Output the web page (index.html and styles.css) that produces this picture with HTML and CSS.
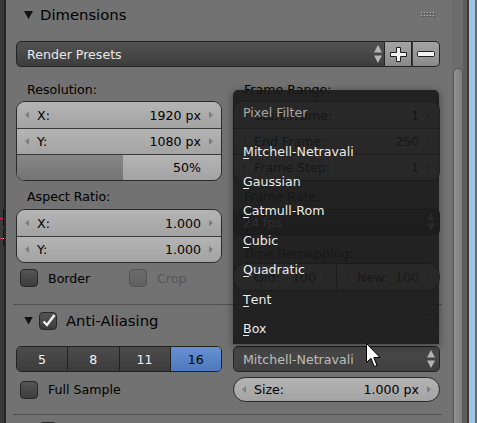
FILE: index.html
```html
<!DOCTYPE html>
<html lang="en">
<head>
<meta charset="utf-8">
<title>Render Properties</title>
<link rel="stylesheet" href="styles.css">
</head>
<body>
<div class="screen">
  <div class="edge">
    <span class="mark red r1"></span><span class="mark tick t1"></span>
    <span class="mark red r2"></span><span class="mark tick t2"></span><span class="mark dot"></span>
  </div>
  <main class="region">
    <section class="panel dims">
      <header class="phead">
        <span class="tri"></span>
        <span class="ptitle">Dimensions</span>
        <svg class="grip" width="14" height="6" viewBox="0 0 14 6"><defs><pattern id="g1" width="3" height="3" patternUnits="userSpaceOnUse"><rect width="1" height="1" fill="#b8b8b8"/><rect x="1" y="1" width="1" height="1" fill="#454545"/></pattern></defs><rect width="14" height="6" fill="url(#g1)"/></svg>
      </header>
      <div class="pbody">
        <div class="presets">
          <div class="menu-btn"><span>Render Presets</span><svg class="ud" width="8" height="18" viewBox="0 0 8 18"><path d="M0 7.5L4 0l4 7.5z M0 10.5L4 18l4-7.5z" fill="#b4b4b4"/></svg></div>
          <div class="tool"><svg width="17" height="15" viewBox="0 0 17 15"><path d="M6.5 .5h4v5h6v4h-6v5h-4v-5h-6v-4h6z" fill="#f2f2f2" stroke="#1e1e1e"/></svg></div>
          <div class="tool minus"><svg width="18" height="7" viewBox="0 0 18 7"><rect x=".5" y=".5" width="17" height="5" rx="1" fill="#f2f2f2" stroke="#1e1e1e"/></svg></div>
        </div>
        <div class="cols">
          <div class="col">
            <div class="lbl first">Resolution:</div>
            <div class="box">
              <div class="num"><i class="al"></i><span class="k">X:</span><span class="v">1920 px</span><i class="ar"></i></div>
              <div class="num"><i class="al"></i><span class="k">Y:</span><span class="v">1080 px</span><i class="ar"></i></div>
              <div class="num slider"><span class="fill" style="width:52%"></span><span class="v">50%</span></div>
            </div>
            <div class="lbl">Aspect Ratio:</div>
            <div class="box">
              <div class="num"><i class="al"></i><span class="k">X:</span><span class="v">1.000</span><i class="ar"></i></div>
              <div class="num"><i class="al"></i><span class="k">Y:</span><span class="v">1.000</span><i class="ar"></i></div>
            </div>
            <div class="checks">
              <label class="chk"><span class="cb"></span>Border</label>
              <label class="chk off"><span class="cb"></span>Crop</label>
            </div>
          </div>
          <div class="col">
            <div class="lbl first">Frame Range:</div>
            <div class="box">
              <div class="num"><i class="al"></i><span class="k">Start Frame:</span><span class="v">1</span><i class="ar"></i></div>
              <div class="num"><i class="al"></i><span class="k">End Frame:</span><span class="v">250</span><i class="ar"></i></div>
              <div class="num"><i class="al"></i><span class="k">Frame Step:</span><span class="v">1</span><i class="ar"></i></div>
            </div>
            <div class="lbl">Frame Rate:</div>
            <div class="menu-btn solo"><span>24 fps</span><svg class="ud" width="8" height="18" viewBox="0 0 8 18"><path d="M0 7.5L4 0l4 7.5z M0 10.5L4 18l4-7.5z" fill="#b4b4b4"/></svg></div>
            <div class="lbl tr">Time Remapping:</div>
            <div class="box split">
              <div class="num"><i class="al"></i><span class="k">Old:</span><span class="v">100</span><i class="ar"></i></div>
              <div class="num"><i class="al"></i><span class="k">New:</span><span class="v">100</span><i class="ar"></i></div>
            </div>
          </div>
        </div>
      </div>
    </section>
    <section class="panel aa">
      <header class="phead">
        <span class="tri"></span>
        <span class="cb on"><svg width="16" height="16" viewBox="0 0 16 16"><path d="M3.5 8.5l3.5 3.5 7.5-10" fill="none" stroke="#f4f4f4" stroke-width="2.4"/></svg></span>
        <span class="ptitle">Anti-Aliasing</span>
        <svg class="grip" width="14" height="6" viewBox="0 0 14 6"><defs><pattern id="g2" width="3" height="3" patternUnits="userSpaceOnUse"><rect width="1" height="1" fill="#b8b8b8"/><rect x="1" y="1" width="1" height="1" fill="#454545"/></pattern></defs><rect width="14" height="6" fill="url(#g2)"/></svg>
      </header>
      <div class="pbody">
        <div class="cols aa-cols">
          <div class="radio-row">
            <span class="rb">5</span><span class="rb">8</span><span class="rb">11</span><span class="rb sel">16</span>
          </div>
          <div class="menu-btn solo filter"><span>Mitchell-Netravali</span><svg class="ud" width="8" height="18" viewBox="0 0 8 18"><path d="M0 7.5L4 0l4 7.5z M0 10.5L4 18l4-7.5z" fill="#b4b4b4"/></svg></div>
          <label class="chk"><span class="cb"></span>Full Sample</label>
          <div class="num pill"><i class="al"></i><span class="k">Size:</span><span class="v">1.000 px</span><i class="ar"></i></div>
        </div>
      </div>
    </section>
    <section class="panel smb">
      <header class="phead">
        <span class="tri closed"></span>
        <span class="cb"></span>
        <span class="ptitle">Sampled Motion Blur</span>
      </header>
    </section>
  </main>
  <div class="scroll"><div class="thumb"></div></div>
  <div class="winedge"></div>
</div>

<div class="popup">
  <div class="mtitle">Pixel Filter</div>
  <div class="mitem"><span class="acc">M</span>itchell-Netravali</div>
  <div class="mitem"><span class="acc">G</span>aussian</div>
  <div class="mitem"><span class="acc">C</span>atmull-Rom</div>
  <div class="mitem"><span class="acc">C</span>ubic</div>
  <div class="mitem"><span class="acc">Q</span>uadratic</div>
  <div class="mitem"><span class="acc">T</span>ent</div>
  <div class="mitem"><span class="acc">B</span>ox</div>
</div>

<svg class="cursor" width="16" height="26" viewBox="0 0 16 26"><path d="M.5.5v19l4.5-4.2 3.2 8.2 2.8-1.1-3.2-7.9h6.2z" fill="#fff" stroke="#000"/></svg>
</body>
</html>
```

FILE: styles.css
```css
* { box-sizing: border-box; margin: 0; padding: 0; }
html, body { width: 477px; height: 423px; overflow: hidden; }
body {
  position: relative;
  background: #727272;
  font-family: "DejaVu Sans", "Liberation Sans", sans-serif;
  font-size: 12.6px;
  line-height: 15px;
  color: #000;
}
.screen { display: flex; height: 423px; }

/* left neighbour area */
.edge { position: relative; flex: none; width: 6px; background: #3a3a3a; border-right: 2px solid #262626; }
.mark { position: absolute; display: block; }
.red { left: 0; width: 3px; height: 1px; background: #c83a3a; }
.r1 { top: 218px; }
.r2 { top: 238px; }
.tick { left: 3px; width: 1px; height: 17px; background: #111; }
.t1 { top: 209px; }
.t2 { top: 229px; }
.dot { left: 3px; top: 238px; width: 1px; height: 1px; background: #fff; }

/* properties region */
.region { flex: none; width: 446px; background: #727272; overflow: hidden; }
.panel { margin: 0 10px 0 7px; padding: 0 2px 0 3px; }
.panel + .panel { border-top: 1px solid #4f4f4f; }

.phead {
  display: flex;
  align-items: center;
  height: 32px;
  padding-left: 8px;
  font-size: 14.8px;
  line-height: 20px;
}
.dims .phead { height: 30px; }
.aa .phead { height: 31px; }
.tri { flex: none; width: 9px; height: 8px; background: #111; clip-path: polygon(0 0, 100% 0, 50% 100%); margin-right: 7px; }
.tri.closed { width: 8px; height: 9px; clip-path: polygon(0 0, 100% 50%, 0 100%); margin-right: 8px; }
.ptitle { white-space: nowrap; }
.grip { flex: none; margin-left: auto; margin-right: 5px; }
.phead .cb { margin: 0 9px 0 -1px; display: flex; align-items: center; justify-content: center; }
.phead .cb svg { overflow: visible; }

.dims .pbody { padding: 11px 0 13px; }
.aa .pbody { padding: 10px 0 12px; }

/* buttons */
.presets { display: flex; height: 26px; }
.menu-btn {
  display: flex;
  align-items: center;
  height: 26px;
  padding: 0 2px 0 10px;
  border: 1px solid #232323;
  border-radius: 5px 0 0 5px;
  background: linear-gradient(#525252, #3d3d3d);
  color: #e8e8e8;
  white-space: nowrap;
}
.menu-btn span { flex: 1; }
.presets .menu-btn { flex: 1; }
.menu-btn.solo { border-radius: 5px; padding: 0 4px 0 9px; }
.menu-btn.filter { color: #bdbdbd; background: linear-gradient(#4a4a4a, #3f3f3f); }
.ud { flex: none; }
.tool {
  flex: none;
  display: flex;
  align-items: center;
  justify-content: center;
  width: 27px;
  height: 26px;
  border: 1px solid #232323;
  border-left: none;
  background: linear-gradient(#a4a4a4, #8a8a8a);
}
.tool.minus { width: 28px; border-left: 1px solid #3a3a3a; border-radius: 0 5px 5px 0; }

.cols { display: grid; grid-template-columns: 206px 207px; column-gap: 11px; align-items: start; }

.lbl { height: 28px; padding: 8px 0 5px 11px; white-space: nowrap; }
.lbl.first { height: 34px; padding: 15px 0 4px 11px; }
.lbl.tr { padding: 11px 0 2px 10px; }

.box { border: 1px solid #2b2b2b; border-radius: 9px; overflow: hidden; }
.num {
  position: relative;
  display: flex;
  align-items: center;
  height: 26px;
  padding: 0 8px;
  background: linear-gradient(#b4b4b4, #a3a3a3);
  white-space: nowrap;
}
.box .num + .num { border-top: 1px solid #3a3a3a; }
.al, .ar { flex: none; display: block; width: 4px; height: 7px; background: #7d7d7d; }
.al { clip-path: polygon(100% 0, 0 50%, 100% 100%); margin-right: 8px; }
.ar { clip-path: polygon(0 0, 100% 50%, 0 100%); margin-left: 8px; }
.v { margin-left: auto; }
.slider { padding-right: 20px; }
.fill { position: absolute; left: 0; top: 0; bottom: 0; background: linear-gradient(#878787, #747474); }
.slider .v { position: relative; }

.split { display: flex; border-radius: 13px; }
.split .num { flex: 1; min-width: 0; }
.box.split .num + .num { border-top: none; border-left: 1px solid #3a3a3a; }

.pill { height: 25px; border: 1px solid #2b2b2b; border-radius: 13px; }

/* checkboxes */
.checks { display: grid; grid-template-columns: 109px 1fr; margin-top: 6px; padding-left: 4px; }
.chk { display: flex; align-items: center; height: 18px; white-space: nowrap; }
.cb {
  flex: none;
  width: 18px;
  height: 18px;
  border: 1px solid #262626;
  border-radius: 4px;
  background: linear-gradient(#545454, #3d3d3d);
  margin-right: 10px;
}
.chk.off { color: #575757; }
.chk.off .cb { background: linear-gradient(#6c6c6c, #606060); border-color: #545454; }

/* anti-aliasing */
.aa-cols { grid-template-rows: 26px 25px; row-gap: 5px; align-items: center; }
.aa-cols .chk { padding-left: 4px; }
.radio-row { display: flex; height: 26px; border: 1px solid #222; border-radius: 5px; overflow: hidden; }
.rb {
  flex: 1;
  display: flex;
  align-items: center;
  justify-content: center;
  color: #f2f2f2;
  background: linear-gradient(#4c4c4c, #3c3c3c);
}
.rb + .rb { border-left: 1px solid #222; }
.rb.sel { color: #000; background: linear-gradient(#6590d2, #4f79bd); }

/* scrollbar and window edge */
.scroll { flex: none; width: 15px; background: #6c6c6c; border-right: 4px solid #5d5d5d; padding: 68px 0 0 1px; overflow: hidden; }
.thumb { width: 10px; height: 400px; border: 1px solid #5a5a5a; border-radius: 5px 5px 0 0; background: linear-gradient(to right, #929292, #808080); }
.winedge { flex: none; width: 10px; border-left: 2px solid #3a3a3a; border-right: 2px solid #6a6a6a; background: #a0c6e4; }

/* popup menu */
.popup {
  position: absolute;
  left: 233px;
  top: 90px;
  width: 206px;
  height: 254px;
  padding-top: 8px;
  background: rgba(26, 26, 26, 0.9);
  border-radius: 5px 5px 0 0;
  box-shadow: 0 2px 8px rgba(0, 0, 0, 0.45);
}
.mtitle { line-height: 29.5px; padding-left: 10px; margin-bottom: 9.5px; color: #a9a9a9; }
.mitem { line-height: 29.5px; padding-left: 10px; color: #ececec; white-space: nowrap; }
.acc { position: relative; }
.acc::after { content: ""; position: absolute; left: 0; bottom: 0; width: 6px; height: 1px; background: currentColor; }

.cursor { position: absolute; left: 366px; top: 343px; }
```
